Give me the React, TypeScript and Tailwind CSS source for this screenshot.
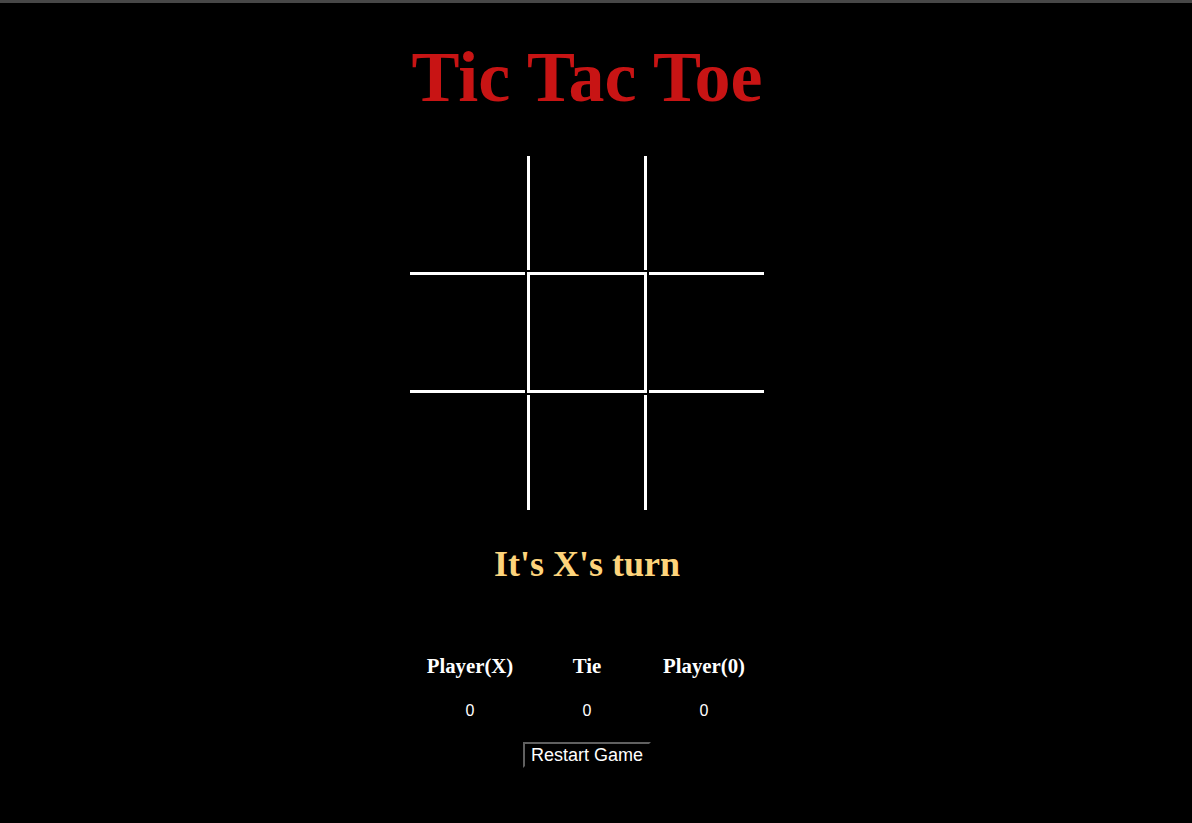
import React from "react";

type Side = { t?: boolean; r?: boolean; b?: boolean; l?: boolean };

const cells: Side[] = [
  {}, { l: true, r: true }, {},
  { t: true, b: true }, { t: true, r: true, b: true, l: true }, { t: true, b: true },
  {}, { l: true, r: true }, {},
];

function Cell({ s }: { s: Side }) {
  return (
    <div
      className={[
        "border-solid border-white cursor-pointer",
        s.t ? "border-t-[3px]" : "border-t-0",
        s.r ? "border-r-[3px]" : "border-r-0",
        s.b ? "border-b-[3px]" : "border-b-0",
        s.l ? "border-l-[3px]" : "border-l-0",
      ].join(" ")}
    />
  );
}

export default function App() {
  return (
    <div className="min-h-[823px] w-full bg-black">
      <div className="h-[3px] w-full bg-[#474747]" />
      <div className="flex w-[1174px] flex-col items-center">
        <h1
          className="mt-[34px] text-[72px] font-bold leading-[80px] text-[#c81414]"
          style={{ fontFamily: '"Liberation Serif", "Times New Roman", serif' }}
        >
          Tic Tac Toe
        </h1>
        <div className="mt-[39px] grid grid-cols-[115px_120px_115px] grid-rows-[114px_121px_115px] gap-[2px]">
          {cells.map((s, i) => (
            <Cell key={i} s={s} />
          ))}
        </div>
        <h2
          className="mt-[34px] text-[36px] font-bold leading-[40px] text-[#fdd47c]"
          style={{ fontFamily: '"Liberation Serif", "Times New Roman", serif' }}
        >
          It's X's turn
        </h2>
        <div className="mt-[70px] grid grid-cols-[117px_117px_117px] text-center text-white">
          {["Player(X)", "Tie", "Player(0)"].map((h) => (
            <div
              key={h}
              className="text-[20.8px] font-bold leading-[24px]"
              style={{ fontFamily: '"Liberation Serif", "Times New Roman", serif' }}
            >
              {h}
            </div>
          ))}
        </div>
        <div
          className="mt-[23px] grid grid-cols-[117px_117px_117px] text-center text-[16px] leading-[20px] text-white"
          style={{ fontFamily: '"Liberation Sans", Arial, sans-serif' }}
        >
          <div>0</div>
          <div>0</div>
          <div>0</div>
        </div>
        <button
          className="mt-[21px] border-2 border-solid border-t-[#606060] border-l-[#606060] border-r-black border-b-black bg-black px-[6px] py-[1px] text-[18px] leading-[20px] text-white"
          style={{ fontFamily: '"Liberation Sans", Arial, sans-serif' }}
        >
          Restart Game
        </button>
      </div>
    </div>
  );
}
